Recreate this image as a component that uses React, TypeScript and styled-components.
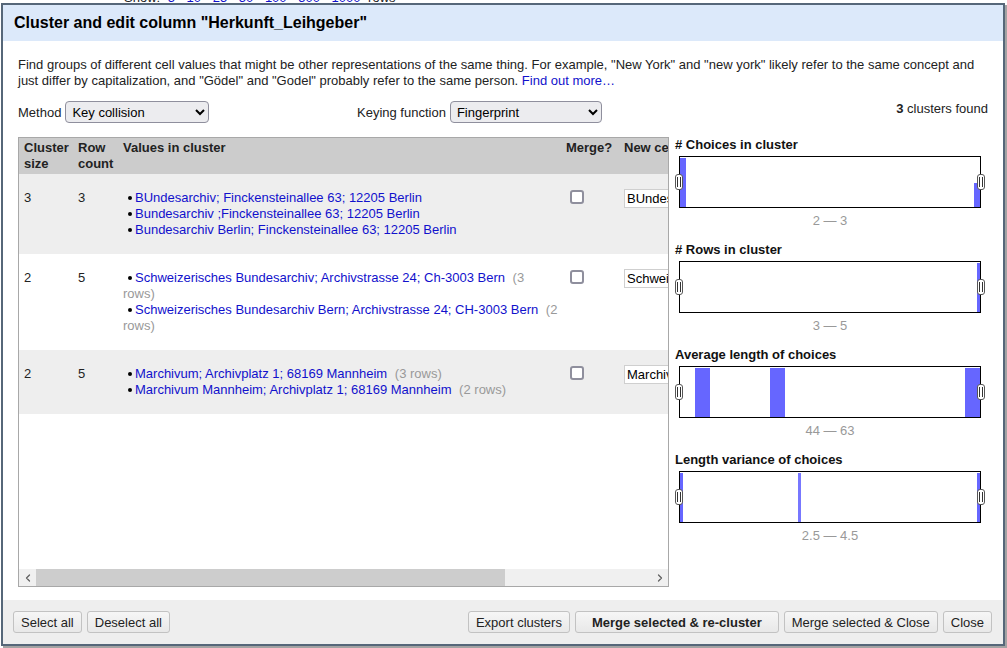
import * as React from "react";
import styled, { createGlobalStyle } from "styled-components";
import { ChevronLeft, ChevronRight } from "lucide-react";

const GlobalStyle = createGlobalStyle`
  html, body {
    margin: 0;
    padding: 0;
    background: #fff;
    font-family: "Liberation Sans", Arial, sans-serif;
    font-size: 13px;
    color: #222;
  }
`;

type Bar = { x: number; y: number; w: number; h: number; light?: boolean };

type FacetData = {
  title: string;
  range: string;
  bars: Bar[];
};

type Entry = { value: string; rows?: number };

type Cluster = {
  size: number;
  rowCount: number;
  entries: Entry[];
  newValue: string;
};

const clusters: Cluster[] = [
  {
    size: 3,
    rowCount: 3,
    entries: [
      { value: "BUndesarchiv; Finckensteinallee 63; 12205 Berlin" },
      { value: "Bundesarchiv ;Finckensteinallee 63; 12205 Berlin" },
      { value: "Bundesarchiv Berlin; Finckensteinallee 63; 12205 Berlin" },
    ],
    newValue: "BUndesarchiv; Finckensteinallee 63; 12205 Berlin",
  },
  {
    size: 2,
    rowCount: 5,
    entries: [
      { value: "Schweizerisches Bundesarchiv; Archivstrasse 24; Ch-3003 Bern", rows: 3 },
      { value: "Schweizerisches Bundesarchiv Bern; Archivstrasse 24; CH-3003 Bern", rows: 2 },
    ],
    newValue: "Schweizerisches Bundesarchiv; Archivstrasse 24; Ch-3003 Bern",
  },
  {
    size: 2,
    rowCount: 5,
    entries: [
      { value: "Marchivum; Archivplatz 1; 68169 Mannheim", rows: 3 },
      { value: "Marchivum Mannheim; Archivplatz 1; 68169 Mannheim", rows: 2 },
    ],
    newValue: "Marchivum; Archivplatz 1; 68169 Mannheim",
  },
];

const facets: FacetData[] = [
  {
    title: "# Choices in cluster",
    range: "2 — 3",
    bars: [
      { x: 0, y: 1, w: 6, h: 49 },
      { x: 294, y: 26, w: 6, h: 24 },
    ],
  },
  {
    title: "# Rows in cluster",
    range: "3 — 5",
    bars: [{ x: 297, y: 1, w: 3, h: 49 }],
  },
  {
    title: "Average length of choices",
    range: "44 — 63",
    bars: [
      { x: 15, y: 1, w: 15, h: 49 },
      { x: 90, y: 1, w: 15, h: 49 },
      { x: 285, y: 1, w: 15, h: 49 },
    ],
  },
  {
    title: "Length variance of choices",
    range: "2.5 — 4.5",
    bars: [
      { x: 0, y: 1, w: 3, h: 49 },
      { x: 118, y: 1, w: 3, h: 49, light: true },
      { x: 297, y: 1, w: 3, h: 49 },
    ],
  },
];

// visible part of the cluster table, for the scrollbar thumb
const visibleRatio = 0.763;

function Facet({ facet }: { facet: FacetData }) {
  return (
    <FacetBlock>
      <FacetTitle>{facet.title}</FacetTitle>
      <Histogram>
        <svg width="300" height="50" viewBox="0 0 300 50">
          {facet.bars.map((b, i) => (
            <rect
              key={i}
              x={b.x}
              y={b.y}
              width={b.w}
              height={b.h}
              fill={b.light ? "#7777ff" : "#6666ff"}
            />
          ))}
        </svg>
        <Handle side="left" />
        <Handle side="right" />
      </Histogram>
      <RangeText>{facet.range}</RangeText>
    </FacetBlock>
  );
}

function ClusterRow({ cluster, odd }: { cluster: Cluster; odd: boolean }) {
  return (
    <Row odd={odd}>
      <Cell>{cluster.size}</Cell>
      <Cell>{cluster.rowCount}</Cell>
      <ValuesCell>
        <ValueList>
          {cluster.entries.map((e) => (
            <ValueItem key={e.value}>
              <ValueLink href="#">{e.value}</ValueLink>
              {e.rows !== undefined && (
                <>
                  {" "}
                  <RowCount>({e.rows} rows)</RowCount>
                </>
              )}
            </ValueItem>
          ))}
        </ValueList>
      </ValuesCell>
      <Cell>
        <MergeBox type="checkbox" />
      </Cell>
      <Cell>
        <NewValue type="text" defaultValue={cluster.newValue} />
      </Cell>
    </Row>
  );
}

export default function App() {
  return (
    <Page>
      <GlobalStyle />
      <Backdrop>
        Show: <BackLink>5</BackLink> <BackLink>10</BackLink> <BackLink>25</BackLink>{" "}
        <BackLink>50</BackLink> <BackLink>100</BackLink> <BackLink>500</BackLink>{" "}
        <BackLink>1000</BackLink> rows
      </Backdrop>
      <Dialog>
        <DialogHeader>Cluster and edit column "Herkunft_Leihgeber"</DialogHeader>
        <DialogBody>
          <Description>
            Find groups of different cell values that might be other representations of the
            same thing. For example, "New York" and "new york" likely refer to the same concept
            and just differ by capitalization, and "Gödel" and "Godel" probably refer to the same
            person. <ValueLink href="#">Find out more…</ValueLink>
          </Description>
          <Controls>
            <Field>
              Method
              <Select defaultValue="key" width={144}>
                <option value="key">Key collision</option>
                <option value="knn">Nearest neighbor</option>
              </Select>
            </Field>
            <Field>
              Keying function
              <Select defaultValue="fp" width={152}>
                <option value="fp">Fingerprint</option>
                <option value="ngram">N-gram fingerprint</option>
              </Select>
            </Field>
            <Found>
              <b>3</b> clusters found
            </Found>
          </Controls>
          <Main>
            <TableFrame>
              <TableViewport>
                <ClusterTable>
                  <colgroup>
                    <col style={{ width: 54 }} />
                    <col style={{ width: 45 }} />
                    <col style={{ width: 443 }} />
                    <col style={{ width: 58 }} />
                    <col style={{ width: 250 }} />
                  </colgroup>
                  <thead>
                    <tr>
                      <HeadCell>Cluster size</HeadCell>
                      <HeadCell>Row count</HeadCell>
                      <HeadCell>Values in cluster</HeadCell>
                      <HeadCell>Merge?</HeadCell>
                      <HeadCell>New cell value</HeadCell>
                    </tr>
                  </thead>
                  <tbody>
                    {clusters.map((c, i) => (
                      <ClusterRow key={i} cluster={c} odd={i % 2 === 0} />
                    ))}
                  </tbody>
                </ClusterTable>
              </TableViewport>
              <HScrollBar>
                <ScrollArrow>
                  <ChevronLeft size={12} strokeWidth={2.5} />
                </ScrollArrow>
                <ScrollTrack>
                  <ScrollThumb style={{ width: `${visibleRatio * 100}%` }} />
                </ScrollTrack>
                <ScrollArrow>
                  <ChevronRight size={12} strokeWidth={2.5} />
                </ScrollArrow>
              </HScrollBar>
            </TableFrame>
            <FacetPanel>
              {facets.map((f) => (
                <Facet key={f.title} facet={f} />
              ))}
            </FacetPanel>
          </Main>
        </DialogBody>
        <DialogFooter>
          <ButtonGroup>
            <Button>Select all</Button>
            <Button>Deselect all</Button>
          </ButtonGroup>
          <ButtonGroup>
            <Button>Export clusters</Button>
            <Button primary>Merge selected &amp; re-cluster</Button>
            <Button>Merge selected &amp; Close</Button>
            <Button>Close</Button>
          </ButtonGroup>
        </DialogFooter>
      </Dialog>
    </Page>
  );
}

const Page = styled.div`
  position: relative;
  width: 1007px;
  height: 648px;
  overflow: hidden;
  background: #fff;
`;

const Backdrop = styled.div`
  margin-top: -10px;
  padding-left: 124px;
  font-size: 13px;
  line-height: 16px;
  color: #222;
`;

const BackLink = styled.span`
  color: #11c;
  margin: 0 4px;
`;

const Dialog = styled.div`
  position: absolute;
  top: 3px;
  left: 1px;
  width: 1004px;
  height: 643px;
  box-sizing: border-box;
  border: 2px solid #566779;
  background: #fff;
  display: flex;
  flex-direction: column;
  box-shadow: 2px 2px 0 #a3a3a3;
`;

const DialogHeader = styled.div`
  background: #dce9fa;
  padding: 8px 11px;
  height: 36px;
  box-sizing: border-box;
  font-size: 16px;
  line-height: 20px;
  font-weight: bold;
  color: #000;
  white-space: nowrap;
`;

const DialogBody = styled.div`
  flex: 1;
  min-height: 0;
  display: flex;
  flex-direction: column;
  padding: 16px 15px 13px 15px;
`;

const Description = styled.p`
  margin: 0;
  font-size: 13px;
  line-height: 16px;
  color: #222;
`;

const Controls = styled.div`
  display: grid;
  grid-template-columns: 339px 1fr auto;
  align-items: center;
  margin-top: 12px;
  height: 22px;
`;

const Field = styled.label`
  display: flex;
  align-items: center;
  gap: 4px;
  white-space: nowrap;
`;

const Select = styled.select<{ width: number }>`
  width: ${(p) => p.width}px;
  height: 22px;
  font-family: "Liberation Sans", Arial, sans-serif;
  font-size: 13px;
  color: #000;
  background: #ececef;
  border: 1px solid #8f8f9d;
  border-radius: 4px;
  padding: 0 2px;
`;

const Found = styled.div`
  align-self: start;
  margin-top: 0;
  line-height: 16px;
  color: #222;
`;

const Main = styled.div`
  flex: 1;
  min-height: 0;
  display: flex;
  margin-top: 14px;
`;

const TableFrame = styled.div`
  flex: 1;
  min-width: 0;
  border: 1px solid #a8a8a8;
  display: flex;
  flex-direction: column;
  background: #fff;
`;

const TableViewport = styled.div`
  flex: 1;
  min-height: 0;
  overflow: hidden;
`;

const HScrollBar = styled.div`
  height: 17px;
  display: flex;
  background: #f0f0f0;
  flex-shrink: 0;
`;

const ScrollArrow = styled.div`
  width: 17px;
  display: flex;
  align-items: center;
  justify-content: center;
  color: #606060;
`;

const ScrollTrack = styled.div`
  flex: 1;
  display: flex;
`;

const ScrollThumb = styled.div`
  background: #cdcdcd;
  height: 100%;
`;

const ClusterTable = styled.table`
  width: 850px;
  table-layout: fixed;
  border-collapse: collapse;
  font-size: 13px;
  line-height: 16px;
`;

const HeadCell = styled.th`
  background: #cccccc;
  text-align: left;
  vertical-align: top;
  font-weight: bold;
  color: #222;
  padding: 2px 5px 2px;
`;

const Row = styled.tr<{ odd: boolean }>`
  background: ${(p) => (p.odd ? "#eeeeee" : "#ffffff")};
`;

const Cell = styled.td`
  vertical-align: top;
  padding: 16px 5px;
  color: #222;
  white-space: nowrap;
`;

const ValuesCell = styled(Cell)`
  white-space: normal;
  padding-right: 2px;
`;

const ValueList = styled.ul`
  list-style: none;
  margin: 0;
  padding: 0;
`;

const ValueItem = styled.li`
  &::before {
    content: "";
    display: inline-block;
    width: 4px;
    height: 4px;
    border-radius: 50%;
    background: #000;
    margin: 0 3px 2px 5px;
    vertical-align: middle;
  }
`;

const ValueLink = styled.a`
  color: #1111cc;
  text-decoration: none;
`;

const RowCount = styled.span`
  color: #999;
  margin-left: 4px;
`;

const MergeBox = styled.input`
  appearance: none;
  width: 14px;
  height: 14px;
  box-sizing: border-box;
  margin: 0 0 0 4px;
  border: 2px solid #8f8f9d;
  border-radius: 3px;
  background: #fff;
  vertical-align: top;
`;

const NewValue = styled.input`
  width: 220px;
  height: 17px;
  box-sizing: content-box;
  margin: -1px 0 0 0;
  padding: 0 2px;
  border: 1px solid #cfcfcf;
  font-family: "Liberation Sans", Arial, sans-serif;
  font-size: 13px;
  color: #000;
  vertical-align: top;
`;

const FacetPanel = styled.div`
  width: 319px;
  flex-shrink: 0;
  padding-left: 6px;
  box-sizing: border-box;
`;

const FacetBlock = styled.div`
  margin-bottom: 13px;
`;

const FacetTitle = styled.div`
  font-weight: bold;
  font-size: 13px;
  line-height: 16px;
  color: #111;
`;

const Histogram = styled.div`
  position: relative;
  width: 300px;
  height: 50px;
  margin: 3px 0 0 4px;
  border: 1px solid #000;
  background: #fff;
  svg {
    display: block;
  }
`;

const Handle = styled.span<{ side: "left" | "right" }>`
  position: absolute;
  top: 17px;
  ${(p) => (p.side === "left" ? "left: -5px;" : "right: -5px;")}
  width: 6px;
  height: 14px;
  border: 1px solid #555;
  border-radius: 3px;
  background:
    linear-gradient(
      to right,
      transparent 1px,
      #333 1px,
      #333 2px,
      transparent 2px,
      transparent 4px,
      #333 4px,
      #333 5px,
      transparent 5px
    ) center / 6px 10px no-repeat,
    #fff;
`;

const RangeText = styled.div`
  width: 302px;
  margin: 5px 0 0 4px;
  text-align: center;
  color: #999;
  font-size: 13px;
  line-height: 16px;
`;

const DialogFooter = styled.div`
  background: #eeeeee;
  height: 44px;
  box-sizing: border-box;
  padding: 11px 11px 11px 10px;
  display: flex;
  justify-content: space-between;
  align-items: flex-start;
`;

const ButtonGroup = styled.div`
  display: flex;
  gap: 5px;
`;

const Button = styled.button<{ primary?: boolean }>`
  height: 22px;
  padding: 0 ${(p) => (p.primary ? "16px" : "7px")};
  font-family: "Liberation Sans", Arial, sans-serif;
  font-size: 13px;
  font-weight: ${(p) => (p.primary ? "bold" : "normal")};
  color: #222;
  background: linear-gradient(#f6f6f6, #e8e8e8);
  border: 1px solid #c2c2c2;
  border-radius: 3px;
  cursor: pointer;
`;
